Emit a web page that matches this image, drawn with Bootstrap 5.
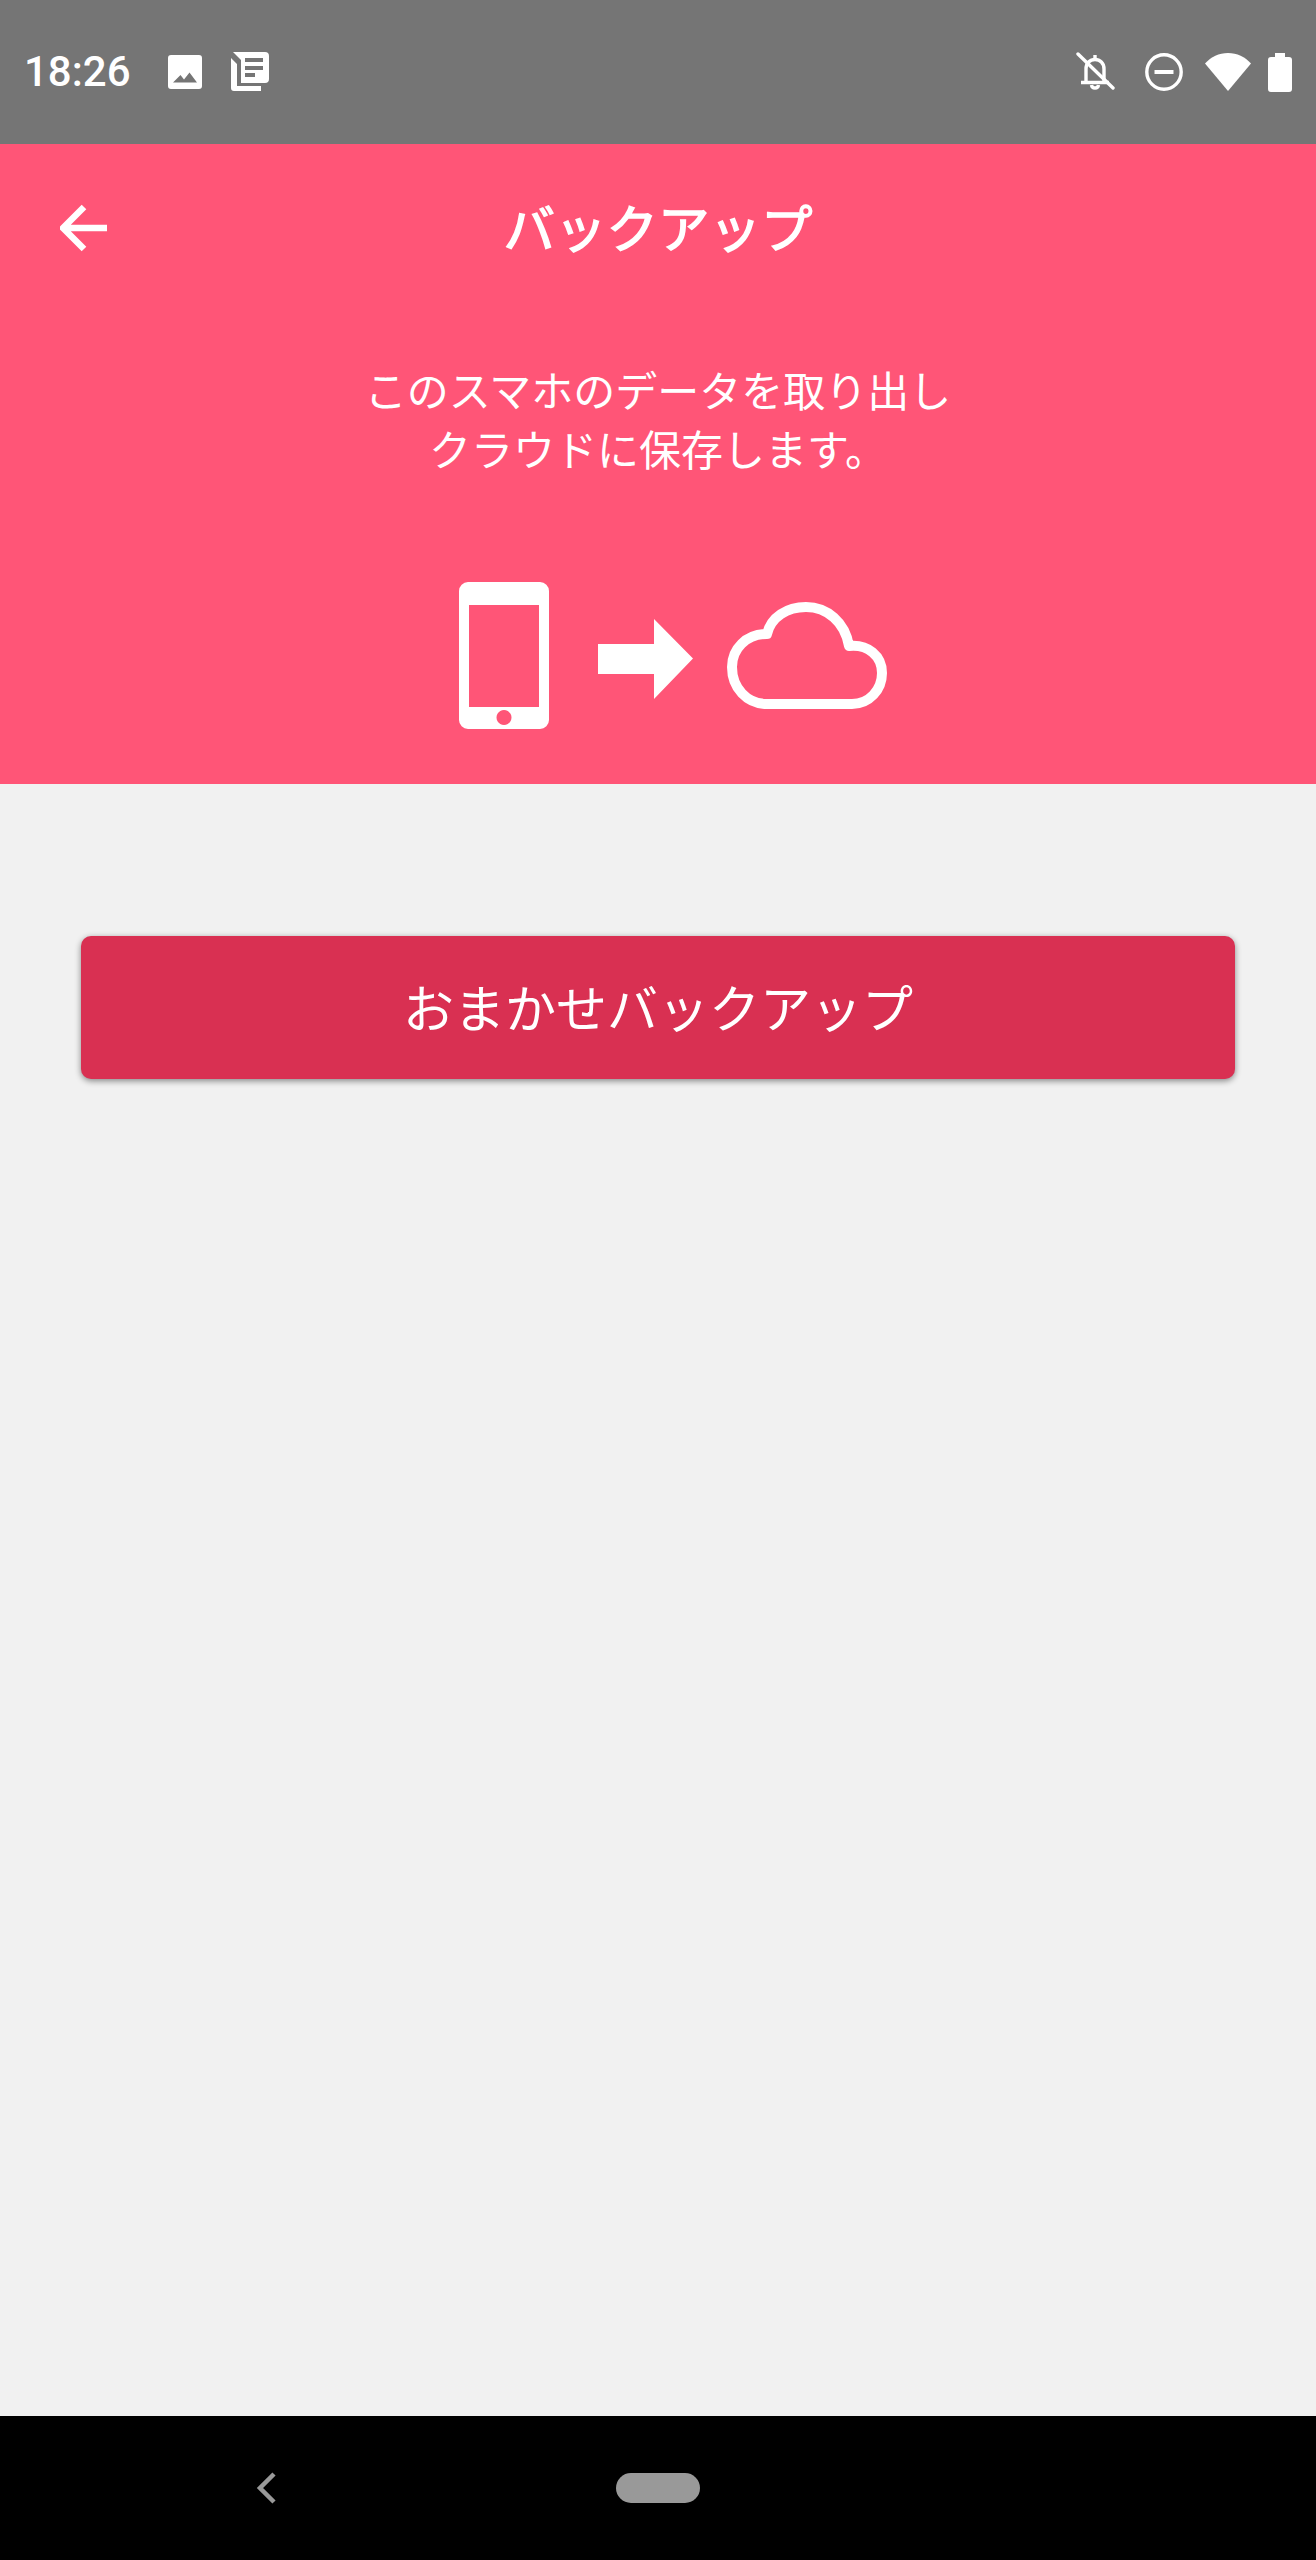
<!DOCTYPE html>
<html lang="ja">
<head>
  <meta charset="UTF-8">
  <meta name="viewport" content="width=device-width, initial-scale=1.0">
  <title>バックアップ</title>
  <link href="https://cdn.jsdelivr.net/npm/bootstrap@5.3.3/dist/css/bootstrap.min.css" rel="stylesheet">
  <script src="https://cdn.jsdelivr.net/npm/bootstrap@5.3.3/dist/js/bootstrap.bundle.min.js"></script>
  <style>
    html, body { height: 2560px; }
    body { background: #f1f1f1; font-family: "Noto Sans CJK JP", "Noto Sans", sans-serif; overflow: hidden; }
    svg { display: block; flex: none; }
    .screen { height: 2560px; }
    .status-strip { height: 144px; background: #757575; color: #fff; padding: 0 24px 0 24px; }
    .status-time { font-family: Roboto, sans-serif; font-weight: 500; font-size: 42px; line-height: 1; width: 144px; }
    .status-news { margin-left: 29px; }
    .status-dnd { margin-left: 29px; }
    .status-wifi { margin-left: 22px; }
    .status-batt { margin-left: 17px; }
    .hero { height: 640px; background: #ff5577; color: #fff; }
    .app-toolbar { height: 164px; }
    .back-arrow { position: absolute; left: 60px; top: 60px; }
    .app-title { font-size: 51.5px; font-weight: 400; -webkit-text-stroke: 1.5px #fff; line-height: 1; margin: 0; }
    .hero-text { font-size: 42px; line-height: 59px; margin: 51px 0 0; text-align: center; }
    .hero-art { margin-top: 105px; padding-left: 30px; }
    .hero-arrow { margin: 37px 34px 0 49px; }
    .hero-cloud { margin-top: 20px; }
    .content-area { padding: 152px 81px 0 81px; }
    .btn-auto { height: 143px; padding-bottom: 8px; background: #d93052; border: 0; border-radius: 10px; color: #fff; font-size: 51px; box-shadow: 0 2px 6px rgba(0, 0, 0, .45); }
    .btn-auto:hover { background: #d93052; color: #fff; }
    .nav-strip { height: 144px; background: #000; }
    .nav-back { position: absolute; left: 256px; top: 56px; }
    .nav-pill { width: 84px; height: 30px; border-radius: 15px; background: #999; }
  </style>
</head>
<body>
  <div class="screen d-flex flex-column">
    <!-- status bar -->
    <div class="status-strip d-flex align-items-center flex-shrink-0">
      <span class="status-time">18:26</span>
      <svg width="34" height="34" viewBox="0 0 34 34"><path fill="#fff" fill-rule="evenodd" d="M3 0H31a3 3 0 0 1 3 3V31a3 3 0 0 1-3 3H3a3 3 0 0 1-3-3V3a3 3 0 0 1 3-3ZM5 27.500H29L21.500 17.500 16 24.500 12.500 20Z"/></svg>
      <svg class="status-news" width="40" height="40" viewBox="0 0 40 40"><path fill="#fff" fill-rule="evenodd" d="M2 0H34a4 4 0 0 1 4 4V27a4 4 0 0 1-4 4H10V8ZM14 6V10H32V6ZM14 14V18H32V14ZM14 21V25H24V21Z"/><path fill="#fff" d="M0 6L6 12V34H30V39H3a3 3 0 0 1-3-3Z"/></svg>
      <div class="flex-grow-1"></div>
      <svg width="40" height="40" viewBox="0 0 40 40"><g fill="none" stroke="#fff" stroke-width="3.400"><path d="M5 30.500H33M10 30.500V17C10 11 14 7.500 19 7.500S28 11 28 17V30.500"/><path stroke-linecap="round" d="M2 2L37 36"/><path d="M19 7V3M15.500 33C16 37 22 37 22.500 33"/></g></svg>
      <svg class="status-dnd" width="38" height="38" viewBox="0 0 38 38"><circle cx="19" cy="19" r="17.200" fill="none" stroke="#fff" stroke-width="3.400"/><path stroke="#fff" stroke-width="4" d="M9.500 19H28.500"/></svg>
      <svg class="status-wifi" width="46" height="40" viewBox="0 0 46 40"><path fill="#fff" d="M23 39L0 11.500C6 5 14 1 23 1S40 5 46 11.500Z"/></svg>
      <svg class="status-batt" width="24" height="40" viewBox="0 0 24 40"><path fill="#fff" d="M7 1H17V5H21A3 3 0 0 1 24 8V37A3 3 0 0 1 21 40H3A3 3 0 0 1 0 37V8A3 3 0 0 1 3 5H7Z"/></svg>
    </div>

    <!-- header -->
    <div class="hero flex-shrink-0">
      <div class="app-toolbar position-relative d-flex align-items-center justify-content-center">
        <svg class="back-arrow" width="48" height="48" viewBox="0 0 48 48"><path fill="none" stroke="#fff" stroke-width="6.500" stroke-linejoin="round" d="M47 24H3M24 3L3 24L24 45"/></svg>
        <h1 class="app-title">バックアップ</h1>
      </div>
      <p class="hero-text">このスマホのデータを取り出し<br>クラウドに保存します。</p>
      <div class="hero-art d-flex justify-content-center align-items-start">
        <svg width="90" height="147" viewBox="0 0 90 147"><path fill="#fff" fill-rule="evenodd" d="M9 0H81a9 9 0 0 1 9 9V138a9 9 0 0 1-9 9H9a9 9 0 0 1-9-9V9a9 9 0 0 1 9-9ZM10 23V125H80V23ZM45 128a7.500 7.500 0 1 0 .01 0Z"/></svg>
        <svg class="hero-arrow" width="95" height="80" viewBox="0 0 95 80"><path fill="#fff" d="M0 25H56V0L95 39.500L56 80V55H0Z"/></svg>
        <svg class="hero-cloud" width="160" height="107" viewBox="0 0 160 107"><path fill="none" stroke="#fff" stroke-width="10" stroke-linejoin="round" d="M40 102H125C142 102 155 88 155 71C155 54 141 42 122 44C118 20 100 5 79 5C60 5 44 15 40 32C19 32 5 47 5 65C5 86 20 102 40 102Z"/></svg>
      </div>
    </div>

    <!-- body -->
    <div class="content-area flex-grow-1">
      <button type="button" class="btn btn-auto w-100 d-flex align-items-center justify-content-center">おまかせバックアップ</button>
    </div>

    <!-- navigation bar -->
    <div class="nav-strip position-relative d-flex align-items-center justify-content-center flex-shrink-0">
      <svg class="nav-back" width="22" height="32" viewBox="0 0 22 32"><path fill="none" stroke="#999" stroke-width="4.500" d="M18 2L4 16L18 30"/></svg>
      <div class="nav-pill"></div>
    </div>
  </div>
</body>
</html>
